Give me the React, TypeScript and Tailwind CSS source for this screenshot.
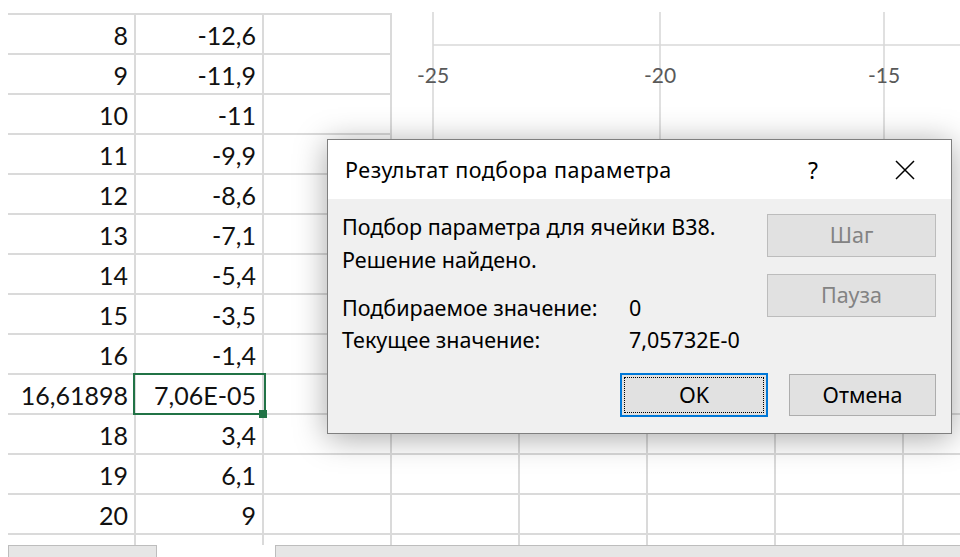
import React from 'react';

// column A / column B values of the worksheet
const rows: [string, string][] = [
  ['8', '-12,6'],
  ['9', '-11,9'],
  ['10', '-11'],
  ['11', '-9,9'],
  ['12', '-8,6'],
  ['13', '-7,1'],
  ['14', '-5,4'],
  ['15', '-3,5'],
  ['16', '-1,4'],
  ['16,61898', '7,06E-05'],
  ['18', '3,4'],
  ['19', '6,1'],
  ['20', '9'],
  ['', ''],
];

const ACTIVE_ROW = 9;

const Cell: React.FC<{ value?: string; active?: boolean }> = ({ value, active }) => (
  <div className="relative w-[128px] shrink-0 border-r-2 border-[#dadada] flex items-end justify-end pr-[6px] pb-[5px] text-[25px] leading-none text-[#111]">
    {value}
    {active && (
      <>
        <div className="absolute -top-[2px] -left-[3px] -right-[4px] -bottom-[2px] border-2 border-[#217346] z-10" />
        <div className="absolute -right-[5px] -bottom-[5px] w-2 h-2 bg-[#217346] z-10" />
      </>
    )}
  </div>
);

const Chart = () => {
  const ticks = [
    { x: 41, label: '-25' },
    { x: 268, label: '-20' },
    { x: 492, label: '-15' },
  ];
  return (
    <div className="absolute left-[392px] top-0 w-[568px] h-[400px] bg-white">
      <svg width="568" height="400" className="block">
        {ticks.map(t => (
          <line key={t.x} x1={t.x} x2={t.x} y1={12} y2={400} stroke="#d9d9d9" strokeWidth={1.6} />
        ))}
        <line x1={41} x2={568} y1={45} y2={45} stroke="#d9d9d9" strokeWidth={1.6} />
        {ticks.map(t => (
          <text key={t.label} x={t.x} y={83} textAnchor="middle" fontFamily="Lato, sans-serif" fontSize={21} fill="#595959">
            {t.label}
          </text>
        ))}
      </svg>
    </div>
  );
};

const GoalSeekDialog = () => (
  <div className="absolute left-[327px] top-[139px] w-[625px] h-[295px] flex flex-col border border-[#7f7f7f] bg-[#f0f0f0] shadow-[0_4px_30px_rgba(0,0,0,0.35)] font-['Noto_Sans',sans-serif] text-[21.5px] text-black">
    <div className="h-[59px] bg-white flex items-center pl-[17px] pr-[36px] leading-[24px]">
      <span className="tracking-[0.5px]">Результат подбора параметра</span>
      <span className="ml-auto mr-[77px] text-[23px]">?</span>
      <svg width="20" height="20" viewBox="0 0 20 20" className="block">
        <path d="M1 1L19 19M19 1L1 19" stroke="#000" strokeWidth="1.5" fill="none" />
      </svg>
    </div>

    <div className="flex-1 flex flex-col">
      <div className="flex items-start pl-[14px] pr-[15px]">
        <div className="flex-1">
          <div className="pt-[11px] leading-[33px]">
            <div>Подбор параметра для ячейки B38.</div>
            <div>Решение найдено.</div>
          </div>
          <div className="mt-[16px] leading-[32px] grid grid-cols-[287px_auto]">
            <div>Подбираемое значение:</div>
            <div>0</div>
            <div>Текущее значение:</div>
            <div>7,05732E-0</div>
          </div>
        </div>
        <div className="flex flex-col gap-[17px] mt-[15px]">
          <button className="w-[169px] h-[43px] bg-[#e1e1e1] border border-[#bcbcbc] text-[#838383]">Шаг</button>
          <button className="w-[169px] h-[43px] bg-[#e1e1e1] border border-[#bcbcbc] text-[#838383]">Пауза</button>
        </div>
      </div>

      <div className="mt-auto flex items-center justify-end gap-[21px] pr-[15px] pb-[16px]">
        <button className="w-[148px] h-[44px] bg-[#e1e1e1] border-2 border-[#0078d7] p-[2px] flex">
          <span className="flex-1 flex items-center justify-center border border-dotted border-black">OK</span>
        </button>
        <button className="w-[147px] h-[42px] bg-[#e1e1e1] border border-[#adadad]">Отмена</button>
      </div>
    </div>
  </div>
);

export default function App() {
  return (
    <div className="relative w-[960px] h-[557px] overflow-hidden bg-white flex flex-col font-['Lato',sans-serif]">
      <div className="flex-1 overflow-hidden pt-[13px] pl-2">
        {rows.map(([a, b], i) => (
          <div key={i} className="flex w-max h-10 border-t-2 border-[#dadada]">
            <Cell value={a} />
            <Cell value={b} active={i === ACTIVE_ROW} />
            {Array.from({ length: 6 }).map((_, j) => (
              <Cell key={j} />
            ))}
          </div>
        ))}
      </div>
      <div className="h-[12px] flex pl-2">
        <div className="w-[149px] border border-b-0 border-[#bdbdbd] bg-[#e6e6e6]" />
        <div className="w-[118px]" />
        <div className="flex-1 border-t border-l border-[#bdbdbd] bg-[#e6e6e6]" />
      </div>
      <Chart />
      <GoalSeekDialog />
    </div>
  );
}
